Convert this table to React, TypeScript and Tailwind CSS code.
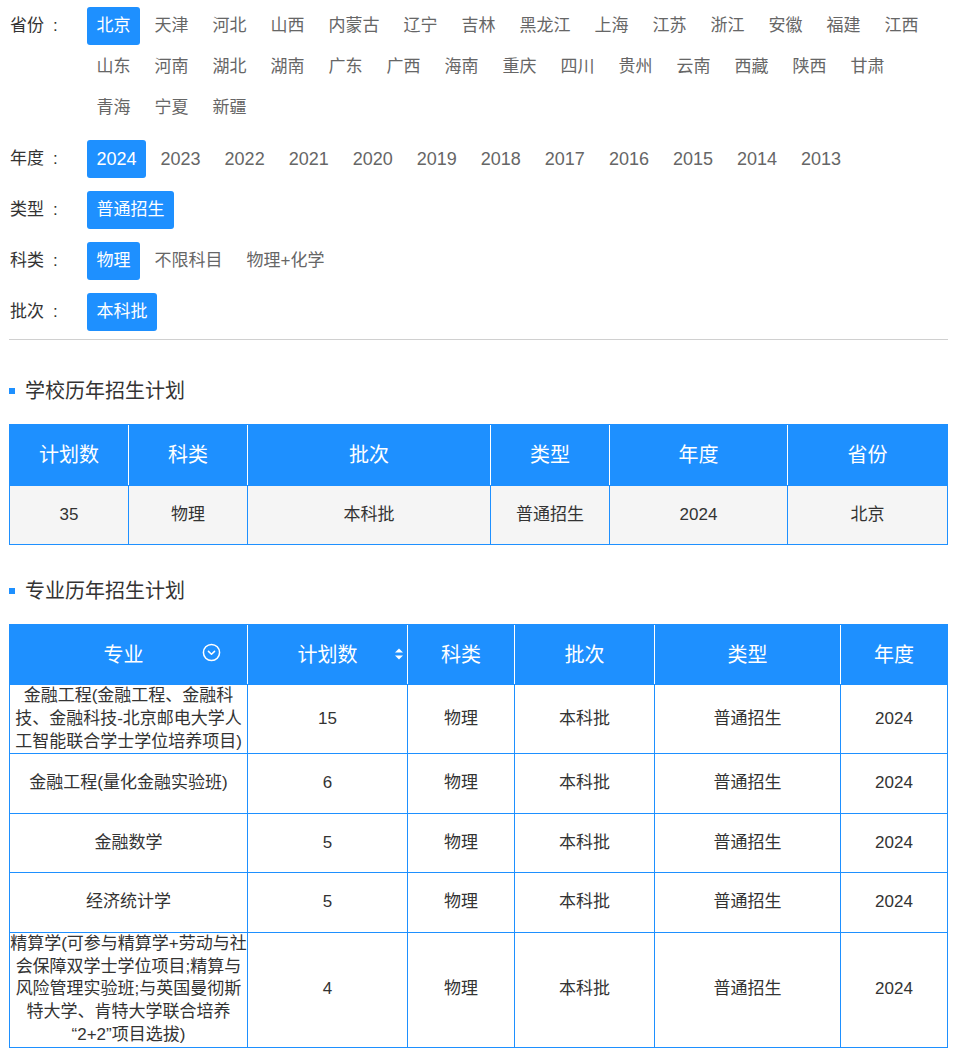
import React, { useState } from "react"

const provinces = [
  "北京", "天津", "河北", "山西", "内蒙古", "辽宁", "吉林", "黑龙江", "上海", "江苏", "浙江", "安徽", "福建", "江西",
  "山东", "河南", "湖北", "湖南", "广东", "广西", "海南", "重庆", "四川", "贵州", "云南", "西藏", "陕西", "甘肃",
  "青海", "宁夏", "新疆",
]
const years = ["2024", "2023", "2022", "2021", "2020", "2019", "2018", "2017", "2016", "2015", "2014", "2013"]

interface MajorRow {
  name: string[]
  count: number
}

const majors: MajorRow[] = [
  { name: ["金融工程(金融工程、金融科", "技、金融科技-北京邮电大学人", "工智能联合学士学位培养项目)"], count: 15 },
  { name: ["金融工程(量化金融实验班)"], count: 6 },
  { name: ["金融数学"], count: 5 },
  { name: ["经济统计学"], count: 5 },
  {
    name: ["精算学(可参与精算学+劳动与社", "会保障双学士学位项目;精算与", "风险管理实验班;与英国曼彻斯", "特大学、肯特大学联合培养", "“2+2”项目选拔)"],
    count: 4,
  },
]

function FilterGroup({
  label,
  options,
  active,
  onPick,
  digits = false,
}: {
  label: string
  options: string[]
  active: string
  onPick: (v: string) => void
  digits?: boolean
}) {
  return (
    <div className="flex">
      <div className="w-[78px] shrink-0 h-[38px] flex items-center pl-[1px] text-[17px] text-[#333]">
        {label}
        <span className="ml-[9px]">:</span>
      </div>
      <div className="flex flex-wrap gap-x-[5px] gap-y-[3px] max-w-[848px]">
        {options.map((o) => (
          <button
            key={o}
            onClick={() => onPick(o)}
            className={`h-[38px] px-[9.5px] flex items-center rounded-[3px] cursor-pointer ${
              digits ? "text-[18px]" : "text-[17px]"
            } ${o === active ? "bg-[#1e90ff] text-white" : "text-[#666]"}`}
          >
            {o}
          </button>
        ))}
      </div>
    </div>
  )
}

function SectionTitle({ children }: { children: React.ReactNode }) {
  return (
    <div className="flex items-center gap-[10px] h-[30px]">
      <span className="w-[6px] h-[6px] bg-[#1e90ff]" />
      <span className="text-[20px] text-[#333]">{children}</span>
    </div>
  )
}

function CircleChevron() {
  return (
    <svg width="19" height="19" viewBox="0 0 20 20" fill="none" stroke="white" strokeWidth="1.6">
      <circle cx="10" cy="10" r="8.5" />
      <path d="M6.8 8.8 L10 11.8 L13.2 8.8" strokeLinecap="round" strokeLinejoin="round" />
    </svg>
  )
}

function SortIcon() {
  return (
    <svg width="10" height="16" viewBox="0 0 10 16" fill="white">
      <path d="M5 2.5 L9 6.5 H1 Z" />
      <path d="M5 13.5 L9 9.5 H1 Z" />
    </svg>
  )
}

export default function App() {
  const [province, setProvince] = useState("北京")
  const [year, setYear] = useState("2024")
  const [kind, setKind] = useState("普通招生")
  const [subject, setSubject] = useState("物理")
  const [batch, setBatch] = useState("本科批")

  const head1 = ["计划数", "科类", "批次", "类型", "年度", "省份"]
  const row1 = ["35", subject, batch, kind, year, province]

  return (
    <div className="w-[956px] pl-[9px] pr-[8px] pt-[7px] pb-[10px] bg-white font-['Liberation_Sans','Noto_Sans_CJK_SC',sans-serif]">
      <div className="flex flex-col gap-[13px]">
        <FilterGroup label="省份" options={provinces} active={province} onPick={setProvince} />
        <FilterGroup label="年度" options={years} active={year} onPick={setYear} digits />
        <FilterGroup label="类型" options={["普通招生"]} active={kind} onPick={setKind} />
        <FilterGroup label="科类" options={["物理", "不限科目", "物理+化学"]} active={subject} onPick={setSubject} />
        <FilterGroup label="批次" options={["本科批"]} active={batch} onPick={setBatch} />
      </div>

      <div className="mt-[8px] border-t border-[#d0d0d0]" />

      <div className="mt-[36px]">
        <SectionTitle>学校历年招生计划</SectionTitle>
      </div>

      <div className="mt-[18px] w-[939px] border border-[#1e90ff]">
        <div className="grid grid-cols-[118px_119px_243px_119px_178px_160px] h-[60px] bg-[#1e90ff] text-white text-[20px]">
          {head1.map((h, i) => (
            <div key={h} className={`flex items-center justify-center ${i > 0 ? "border-l border-white" : ""}`}>
              {h}
            </div>
          ))}
        </div>
        <div className="grid grid-cols-[118px_119px_243px_119px_178px_160px] bg-[#f5f5f5] text-[#333] text-[17px]">
          {row1.map((c, i) => (
            <div
              key={i}
              className={`h-[59px] flex items-center justify-center border-t border-[#1e90ff] ${i > 0 ? "border-l" : ""}`}
            >
              {c}
            </div>
          ))}
        </div>
      </div>

      <div className="mt-[31px]">
        <SectionTitle>专业历年招生计划</SectionTitle>
      </div>

      <div className="mt-[18px] w-[939px] border border-[#1e90ff]">
        <div className="grid grid-cols-[237px_160px_107px_140px_186px_107px] h-[59px] bg-[#1e90ff] text-white text-[20px]">
          <div className="relative flex items-center justify-center pr-[10px]">
            专业
            <span className="absolute right-[26px] top-[18px]">
              <CircleChevron />
            </span>
          </div>
          <div className="relative flex items-center justify-center border-l border-white">
            计划数
            <span className="absolute right-[3px] top-[21px]">
              <SortIcon />
            </span>
          </div>
          {["科类", "批次", "类型", "年度"].map((h) => (
            <div key={h} className="flex items-center justify-center border-l border-white">
              {h}
            </div>
          ))}
        </div>
        {majors.map((m, r) => (
          <div key={r} className="grid grid-cols-[237px_160px_107px_140px_186px_107px] text-[#333] text-[17px] leading-[22.8px]">
            <div className="min-h-[59.5px] flex flex-col items-center justify-center text-center border-t border-[#1e90ff] whitespace-nowrap">
              {m.name.map((l) => (
                <span key={l}>{l}</span>
              ))}
            </div>
            {[String(m.count), "物理", "本科批", "普通招生", "2024"].map((c, i) => (
              <div key={i} className="flex items-center justify-center border-t border-l border-[#1e90ff]">
                {c}
              </div>
            ))}
          </div>
        ))}
      </div>
    </div>
  )
}
